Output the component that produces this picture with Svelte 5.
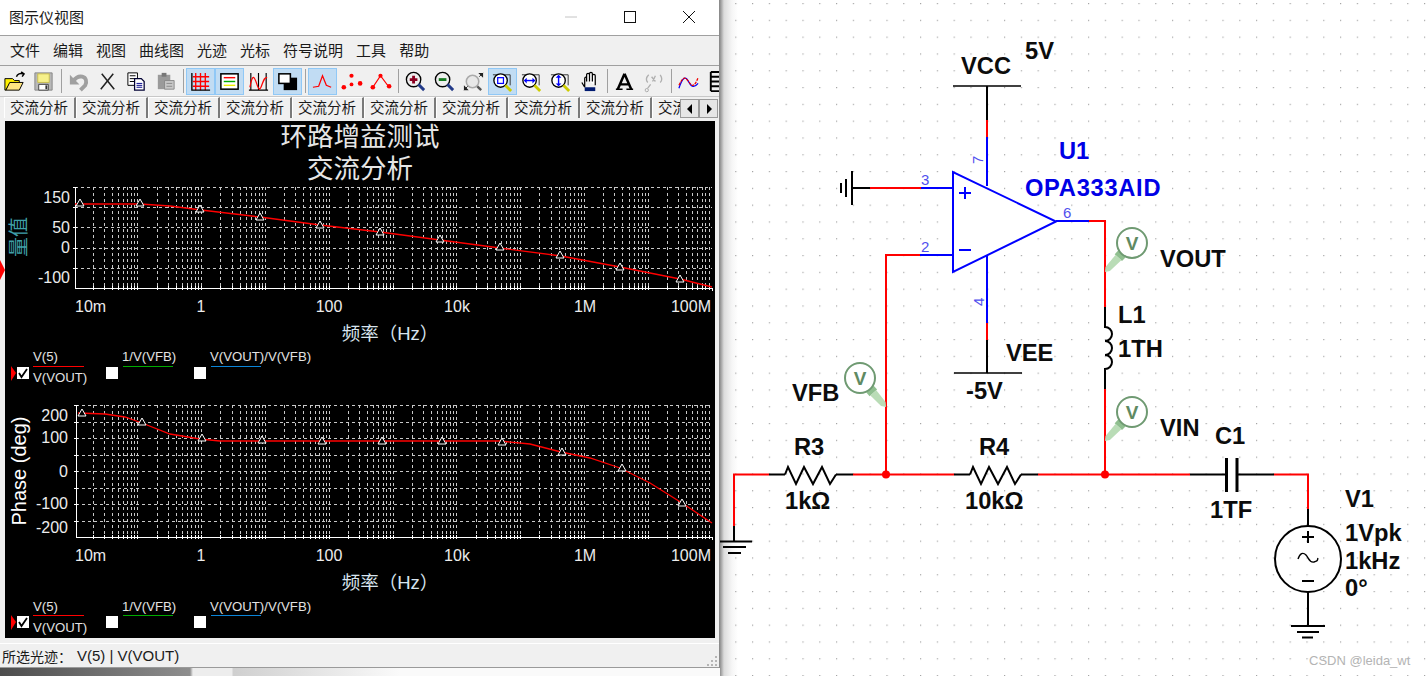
<script>
  const menus = ['文件', '编辑', '视图', '曲线图', '光迹', '光标', '符号说明', '工具', '帮助'];
  const tabs = Array(10).fill('交流分析');

  // log frequency axis, 10m to 100M
  const X0 = 74, DECADE = 63.8, XEND = 712;
  const gridX = [];
  for (let d = 0; d < 10; d++) {
    for (let m = 1; m < 10; m++) {
      const x = X0 + (d + Math.log10(m)) * DECADE;
      if (x > 76 && x <= XEND) gridX.push(+x.toFixed(1));
    }
  }

  const freqLabels = [
    { t: '1', x: 201 }, { t: '100', x: 329 }, { t: '10k', x: 457 }, { t: '1M', x: 585 },
  ];

  const plots = [
    {
      left: 75, top: 187, bottom: 288,
      rows: [187, 207, 227, 248, 268],
      ticksY: [[150, 203], [50, 233], [0, 253], [-100, 283]], labelX: 70, freqY: 312, titleY: 340,
      trace: '75,204 140,204 170,206 201,210 260,217 320,225 380,232 440,240 500,248 561,256 620,267 680,279 712,287',
      marks: [[80, 204], [140, 204], [200, 210], [260, 218], [320, 226], [380, 233], [440, 240], [500, 248], [560, 256], [620, 268], [680, 280]],
      legend: [361, 366.5, 367, 382],
    },
    {
      left: 76, top: 405, bottom: 537,
      rows: [405, 422, 438, 455, 471, 488, 504, 521],
      ticksY: [[200, 421], [100, 443], [0, 477], [-100, 509], [-200, 533]], labelX: 68, freqY: 561, titleY: 589,
      trace: '78,413 105,414 125,417 142,423 170,434 182,436 200,439 220,441 260,441 500,441 530,444 561,452 590,458 620,468 650,483 682,503 712,523',
      marks: [[82, 414], [142, 423], [202, 439], [262, 441], [322, 442], [382, 442], [442, 442], [502, 443], [562, 453], [622, 469], [682, 504]],
      legend: [610.5, 615.5, 616, 631.5],
    },
  ];

  function zigzag(x) {
    const d = [0, 3, 11, 19, 28, 37, 45, 51];
    const y = [474.5, 467, 484, 467, 484, 467, 484, 474.5];
    return d.map((v, i) => `${x + v},${y[i]}`).join(' ');
  }
</script>

{#snippet probe(cx, cy, tipX, tipY)}
  {@const dx = tipX - cx}
  {@const dy = tipY - cy}
  {@const len = Math.hypot(dx, dy)}
  {@const ux = dx / len}
  {@const uy = dy / len}
  <line x1={cx + ux * 15} y1={cy + uy * 15} x2={cx + ux * 20} y2={cy + uy * 20} stroke="#8fbf8f" stroke-width="10" />
  <polygon
    points="{cx + ux * 20 - uy * 4},{cy + uy * 20 + ux * 4} {cx + ux * 20 + uy * 4},{cy + uy * 20 - ux * 4} {tipX - ux * 4 + uy * 3},{tipY - uy * 4 - ux * 3} {tipX},{tipY} {tipX - ux * 4 - uy * 3},{tipY - uy * 4 + ux * 3}"
    fill="#b9dcb6"
  />
  <circle {cx} {cy} r="15" fill="#fff" stroke="#6f9a72" stroke-width="2" />
  <text x={cx} y={cy + 7} class="probe-v">V</text>
{/snippet}

<div class="page">
  <div class="left">
    <div class="window">
      <div class="titlebar">
        <span class="title">图示仪视图</span>
        <div class="caption">
          <svg width="14" height="14" viewBox="0 0 14 14"><path d="M1 7h12" stroke="#c4c4c4" /></svg>
          <svg width="14" height="14" viewBox="0 0 14 14"><rect x="1.5" y="1.5" width="11" height="11" fill="none" stroke="#111" /></svg>
          <svg width="14" height="14" viewBox="0 0 14 14"><path d="M1 1l12 12M13 1L1 13" stroke="#111" /></svg>
        </div>
      </div>

      <nav class="menubar">
        {#each menus as m}<span>{m}</span>{/each}
      </nav>

      <div class="toolbar">
        <button class="tb" aria-label="打开">
          <svg viewBox="0 0 24 24"><path d="M2 9h8l2 2h5v3H7l-4 7H2z" fill="#fff000" stroke="#000" /><path d="M3 21l4-8h14l-4 8z" fill="#ffe680" stroke="#000" /><path d="M14 7c1-3 4-4 7-3M19 2l3 2-2 3" fill="none" stroke="#000" stroke-width="1.5" /></svg>
        </button>
        <button class="tb" aria-label="保存">
          <svg viewBox="0 0 24 24"><path d="M3 3h18v18H3z" fill="#b8b8b8" stroke="#888" /><path d="M6 4h12v9H6z" fill="#f6f08a" stroke="#c8bc50" /><path d="M7 15h10v6H7z" fill="#fff" stroke="#444" /><path d="M14 16h2v4h-2z" fill="#333" /></svg>
        </button>
        <i class="sep"></i>
        <button class="tb" aria-label="撤销">
          <svg viewBox="0 0 24 24"><path d="M6 12c3-4 6-6 10-5s5 5 3 9l-5 5" fill="none" stroke="#a0a0a0" stroke-width="4" /><path d="M3 5v10h10z" fill="#a0a0a0" /></svg>
        </button>
        <button class="tb" aria-label="剪切">
          <svg viewBox="0 0 24 24"><path d="M6 4l13 16M18 4L5 20" stroke="#222" stroke-width="1.6" fill="none" /></svg>
        </button>
        <button class="tb" aria-label="复制">
          <svg viewBox="0 0 24 24"><path d="M3 3h10v13H3z" fill="#fff" stroke="#000" /><path d="M5 6h6M5 9h6M5 12h6" stroke="#000" /><path d="M10 9h7l3 3v9H10z" fill="#fff" stroke="#003" stroke-width="1.3" /><path d="M12 14h6M12 16h6M12 18h6" stroke="#00008a" /></svg>
        </button>
        <button class="tb" aria-label="粘贴">
          <svg viewBox="0 0 24 24"><path d="M4 5h13v15H4z" fill="#9a9a9a" /><path d="M8 3h5v4H8z" fill="#777" /><path d="M11 11h10v9H11z" fill="#c8c8c8" stroke="#8a8a8a" /><path d="M13 14h6M13 17h6" stroke="#8a8a8a" /></svg>
        </button>
        <i class="sep"></i>
        <button class="tb on" aria-label="网格">
          <svg viewBox="0 0 24 24"><path d="M4 7h17M4 12h17M4 17h17M7 3v18M12 3v18M17 3v18" stroke="#f00" stroke-width="1.4" /><path d="M3 3v18h19" fill="none" stroke="#000" stroke-width="1.4" /></svg>
        </button>
        <button class="tb on" aria-label="图例">
          <svg viewBox="0 0 24 24"><rect x="3" y="4" width="18" height="16" fill="#fff" stroke="#000" stroke-width="1.6" /><path d="M6 8h12" stroke="#f00" stroke-width="1.5" /><path d="M6 12h12" stroke="#0a0" stroke-width="1.5" /><path d="M6 16h12" stroke="#ee0" stroke-width="1.5" /></svg>
        </button>
        <button class="tb" aria-label="曲线">
          <svg viewBox="0 0 24 24"><path d="M4 3v18M12 3v18M20 3v18M2 21h20" stroke="#000" stroke-width="1.2" fill="none" /><path d="M3 18c3-16 5-10 7-4s3 8 5 3 3-10 6-9" fill="none" stroke="#f00" stroke-width="1.3" /></svg>
        </button>
        <button class="tb on" aria-label="反色">
          <svg viewBox="0 0 24 24"><rect x="8" y="8" width="14" height="13" fill="#000" /><rect x="3" y="4" width="12" height="10" fill="#fff" stroke="#000" stroke-width="1.6" /></svg>
        </button>
        <i class="sep"></i>
        <button class="tb on" aria-label="光迹线">
          <svg viewBox="0 0 24 24"><path d="M2 18l6-1 4-11 4 10 5 2" fill="none" stroke="#f00" stroke-width="1.3" /></svg>
        </button>
        <button class="tb" aria-label="光迹点">
          <svg viewBox="0 0 24 24"><circle cx="4" cy="18" r="2.4" fill="#f00" /><circle cx="12" cy="6" r="2.2" fill="#f00" /><circle cx="12" cy="15" r="2" fill="#f00" /><circle cx="21" cy="14" r="2.4" fill="#f00" /></svg>
        </button>
        <button class="tb" aria-label="光迹点线">
          <svg viewBox="0 0 24 24"><path d="M4 18l8-12 9 12" fill="none" stroke="#f00" stroke-width="1.3" /><circle cx="4" cy="18" r="2.4" fill="#f00" /><circle cx="12" cy="6" r="2.2" fill="#f00" /><circle cx="21" cy="17" r="2.4" fill="#f00" /></svg>
        </button>
        <i class="sep"></i>
        <button class="tb" aria-label="放大">
          <svg viewBox="0 0 24 24"><circle cx="10" cy="10" r="7.5" fill="#eee" stroke="#000" stroke-width="1.4" /><path d="M6 10h8M10 6v8" stroke="#8a0020" stroke-width="3" /><path d="M15 15l6 6" stroke="#223a88" stroke-width="3" /></svg>
        </button>
        <button class="tb" aria-label="缩小">
          <svg viewBox="0 0 24 24"><circle cx="10" cy="10" r="7.5" fill="#eee" stroke="#000" stroke-width="1.4" /><path d="M6 10h8" stroke="#157a20" stroke-width="3" /><path d="M15 15l6 6" stroke="#223a88" stroke-width="3" /></svg>
        </button>
        <button class="tb" aria-label="全部">
          <svg viewBox="0 0 24 24"><circle cx="11" cy="12" r="6.5" fill="#e8e8e8" stroke="#aaa" stroke-width="1.6" /><path d="M16 17l4 4" stroke="#555" stroke-width="2.5" /><path d="M17 3h5v5zM7 21H2v-5z" fill="#222" /><path d="M22 3l-4 4M2 21l4-4" stroke="#222" /></svg>
        </button>
        <button class="tb on" aria-label="框选">
          <svg viewBox="0 0 24 24"><path d="M2 5h18v11" fill="none" stroke="#333" /><circle cx="10" cy="11" r="7" fill="#fff" stroke="#000" stroke-width="1.4" /><rect x="7" y="8" width="6" height="6" fill="none" stroke="#00f" stroke-width="1.3" /><path d="M15 16l6 6" stroke="#cc0" stroke-width="3" /></svg>
        </button>
        <button class="tb" aria-label="水平">
          <svg viewBox="0 0 24 24"><path d="M2 5h18v11" fill="none" stroke="#333" /><circle cx="10" cy="11" r="7" fill="#fff" stroke="#000" stroke-width="1.4" /><path d="M5 11h10" stroke="#00f" stroke-width="1.5" /><path d="M4 11l3-3v6zM16 11l-3-3v6z" fill="#00f" /><path d="M15 16l6 6" stroke="#cc0" stroke-width="3" /></svg>
        </button>
        <button class="tb" aria-label="垂直">
          <svg viewBox="0 0 24 24"><path d="M2 5h18v11" fill="none" stroke="#333" /><circle cx="10" cy="11" r="7" fill="#fff" stroke="#000" stroke-width="1.4" /><path d="M10 6v10" stroke="#00f" stroke-width="1.5" /><path d="M10 5l-3 3h6zM10 17l-3-3h6z" fill="#00f" /><path d="M15 16l6 6" stroke="#cc0" stroke-width="3" /></svg>
        </button>
        <button class="tb" aria-label="平移">
          <svg viewBox="0 0 24 24"><path d="M7 18V9M7 18l-3-5M7 9c0-2 2-2 2 0v3-7c0-2 3-2 3 0v7-8c0-2 3-2 3 0v8-6c0-2 3-2 3 0v10" fill="#fff" stroke="#000" stroke-width="1.3" /><path d="M7 18h11v4H7z" fill="#001a70" /></svg>
        </button>
        <i class="sep"></i>
        <button class="tb" aria-label="文字">
          <svg viewBox="0 0 24 24"><path d="M12 4L5 20M12 4l7 16M8 15h8" stroke="#000" stroke-width="2.6" fill="none" /><path d="M3 20h7M14 20h7" stroke="#000" stroke-width="1.5" /></svg>
        </button>
        <button class="tb" aria-label="表达式">
          <svg viewBox="0 0 24 24"><circle cx="5" cy="21" r="1.7" fill="none" stroke="#aaa" /><path d="M6 19l3-4M7 5C4 8 4 11 6 13M19 5c2 3 2 6 0 8M10 7l4 5M14 6l-3 6" stroke="#b0b0b0" stroke-width="1.4" fill="none" /></svg>
        </button>
        <i class="sep"></i>
        <button class="tb" aria-label="叠加">
          <svg viewBox="0 0 24 24"><path d="M2 19C6 7 9 6 12 12s6 7 10 2" fill="none" stroke="#00f" stroke-width="1.3" /><path d="M2 16c4-8 6-10 10-4s6 6 10-4" fill="none" stroke="#e00" stroke-width="1.3" stroke-dasharray="3 1" /></svg>
        </button>
        <button class="tb" aria-label="导出">
          <svg viewBox="0 0 24 24"><path d="M5 2v20M5 2h9M5 7h9M5 12h9M5 17h9M5 22h9" stroke="#000" stroke-width="2" fill="none" /><path d="M14 7h9M14 18h9" stroke="#e00" /></svg>
        </button>
      </div>

      <div class="tabstrip">
        <div class="tabs">
          {#each tabs as t}<span class="tab">{t}</span>{/each}
        </div>
        <div class="scroll">
          <button aria-label="上一页"><svg width="8" height="10" viewBox="0 0 8 10"><path d="M6 0v10L1 5z" fill="#000" /></svg></button>
          <button aria-label="下一页"><svg width="8" height="10" viewBox="0 0 8 10"><path d="M2 0v10l5-5z" fill="#000" /></svg></button>
        </div>
      </div>

      <div class="plotwrap">
        <svg class="plot" viewBox="5 121 710 517" width="710" height="517">
          <polygon points="0,260 5,270 0,280" fill="#f00" />
          <text x="360" y="146" class="title1">环路增益测试</text>
          <text x="360" y="178" class="title1">交流分析</text>

          {#each plots as p}
            <!-- grid -->
            {#each gridX as x}
              <line x1={x} x2={x} y1={p.top} y2={p.bottom} class="grid" />
            {/each}
            {#each p.rows as y}
              <line x1={p.left} x2={XEND} y1={y} y2={y} class="grid" />
            {/each}
            <!-- axes -->
            <path d="M{p.left - 2} {p.top}h2V{p.bottom}H{XEND}v3" class="axis" />
            {#each gridX as x}
              <line x1={x} x2={x} y1={p.bottom - 2} y2={p.bottom + 2} class="axis" />
            {/each}
            {#each p.rows as y}
              <line x1={p.left - 2} x2={p.left + 2} y1={y} y2={y} class="axis" />
            {/each}

            {#each p.ticksY as [v, y]}
              <text x={p.labelX} {y} class="tick end">{v}</text>
            {/each}
            <text x="75" y={p.freqY} class="tick">10m</text>
            {#each freqLabels as f}
              <text x={f.x} y={p.freqY} class="tick mid">{f.t}</text>
            {/each}
            <text x="711" y={p.freqY} class="tick end">100M</text>
            <text x="390" y={p.titleY} class="xtitle">频率（Hz）</text>

            <polyline points={p.trace} class="trace" />
            {#each p.marks as [x, y]}
              <polygon points="{x},{y - 5} {x - 4},{y + 2} {x + 4},{y + 2}" class="mark" />
            {/each}

            <!-- legend -->
            <text x="33" y={p.legend[0]} class="leg">V(5)</text>
            <line x1="33" x2="84" y1={p.legend[1]} y2={p.legend[1]} stroke="#f00" />
            <text x="122" y={p.legend[0]} class="leg">1/V(VFB)</text>
            <line x1="123" x2="173" y1={p.legend[1]} y2={p.legend[1]} stroke="#0a0" />
            <text x="210" y={p.legend[0]} class="leg">V(VOUT)/V(VFB)</text>
            <line x1="211" x2="261" y1={p.legend[1]} y2={p.legend[1]} stroke="#0a84d8" />
            <polygon points="11,{p.legend[2] - 1} 16,{p.legend[2] + 6} 11,{p.legend[2] + 14}" fill="#f00" />
            <rect x="17" y={p.legend[2]} width="12" height="12" fill="#fff" />
            <path d="M19 {p.legend[2] + 6}l2.5 4 5.5-8" fill="none" stroke="#000" stroke-width="1.8" />
            <rect x="106" y={p.legend[2]} width="12" height="12" fill="#fff" />
            <rect x="194" y={p.legend[2]} width="12" height="12" fill="#fff" />
            <text x="33" y={p.legend[3]} class="leg">V(VOUT)</text>
          {/each}

          <text transform="translate(26 237) rotate(-90)" class="ylabel cjk">量值</text>
          <text transform="translate(26 471) rotate(-90)" class="ylabel">Phase (deg)</text>
        </svg>
      </div>

      <div class="statusbar">
        <span class="status-cn">所选光迹：</span><span>V(5) | V(VOUT)</span>
        <svg class="grip" width="12" height="12" viewBox="0 0 12 12">
          <path d="M9 2h2v2H9zM5 6h2v2H5zM9 6h2v2H9zM1 10h2v2H1zM5 10h2v2H5zM9 10h2v2H9z" fill="#b5b5b5" />
        </svg>
      </div>
    </div>
    <div class="under"></div>
  </div>

  <div class="canvas">
    <svg class="sheet" viewBox="720 0 706 676" width="706" height="676">
      <defs>
        <pattern id="dots" x="836" y="3" width="16.8" height="16.8" patternUnits="userSpaceOnUse">
          <rect width="1.2" height="1.2" fill="#a4a4a4" />
        </pattern>
      </defs>
      <rect x="720" y="0" width="706" height="676" fill="url(#dots)" />

      <!-- VCC -->
      <path d="M987 86v34" class="blk" />
      <path d="M953 86h68" class="thin" />
      <path d="M987 120v17" class="red" />
      <path d="M987 137v49" class="blu" />
      <!-- VEE -->
      <path d="M987 256v67" class="blu" />
      <path d="M987 323v17" class="red" />
      <path d="M987 340v33" class="blk" />
      <path d="M954 373h68" class="thin" />

      <!-- op amp -->
      <polygon points="953,172 953,272 1056,221.5" class="opamp" />
      <path d="M959 193h12M965 187v12M959 250h12" class="blu" />

      <!-- pin 3 and its ground -->
      <path d="M921 188h32" class="blu" />
      <path d="M870 188h51" class="red" />
      <path d="M852 188h18M852 171v34M846 179v18M841 183v10" class="blk" />
      <!-- pin 2 -->
      <path d="M920 255h33" class="blu" />
      <path d="M920 255h-34v219" class="red" />
      <!-- pin 6 -->
      <path d="M1056 221h33" class="blu" />
      <path d="M1089 221h16v86" class="red" />

      <!-- L1 -->
      <path d="M1105 307v20a7 7 0 0 1 0 14a7 7 0 0 1 0 14a7 7 0 0 1 0 14v20" class="blk" />
      <path d="M1105 389v85" class="red" />

      <!-- main line -->
      <path d="M734 526V474.5h35" class="red" />
      <path d="M734 526v15.5M720 541.5h32M723 547h23M728 553h13" class="blk" />
      <path d="M769 474.5h16" class="blk" />
      <polyline points={zigzag(785)} class="blk" />
      <path d="M836 474.5h17" class="blk" />
      <path d="M853 474.5h101" class="red" />
      <path d="M954 474.5h16" class="blk" />
      <polyline points={zigzag(970)} class="blk" />
      <path d="M1021 474.5h17" class="blk" />
      <path d="M1038 474.5h152" class="red" />
      <path d="M1190 474.5h36M1237 474.5h37" class="blk" />
      <path d="M1226.5 458v34M1237 458v34" class="plate" />
      <path d="M1274 474.5h34V509" class="red" />

      <!-- V1 -->
      <path d="M1308 509v17M1308 592v34M1291 626h34M1297 632h22M1302 637.5h11" class="blk" />
      <circle cx="1308" cy="559" r="33" fill="none" stroke="#000" stroke-width="2" />
      <path d="M1302 537h12M1308 531v12M1302 581h12" class="blk" />
      <path d="M1298 559c2-6 5-7 8-4s3 8 8 7 3-2 4-4" fill="none" stroke="#000" stroke-width="1.4" />

      <circle cx="886" cy="474.5" r="4" fill="#f00" />
      <circle cx="1105" cy="474.5" r="4" fill="#f00" />

      {@render probe(1132, 243, 1105, 272)}
      {@render probe(860, 378, 886, 407)}
      {@render probe(1132, 412, 1105, 441)}

      <text x="961" y="74" class="lbl">VCC</text>
      <text x="1025" y="59" class="lbl">5V</text>
      <text x="1059" y="159" class="lbl blue">U1</text>
      <text x="1025" y="196" class="lbl blue wide">OPA333AID</text>
      <text x="1160" y="267" class="lbl">VOUT</text>
      <text x="1118" y="323" class="lbl">L1</text>
      <text x="1118" y="357" class="lbl">1TH</text>
      <text x="1006" y="361" class="lbl">VEE</text>
      <text x="966" y="399" class="lbl">-5V</text>
      <text x="792" y="401" class="lbl">VFB</text>
      <text x="794" y="455" class="lbl">R3</text>
      <text x="785" y="509" class="lbl">1kΩ</text>
      <text x="979" y="455" class="lbl">R4</text>
      <text x="965" y="509" class="lbl">10kΩ</text>
      <text x="1160" y="436" class="lbl">VIN</text>
      <text x="1215" y="444" class="lbl">C1</text>
      <text x="1210" y="518" class="lbl">1TF</text>
      <text x="1345" y="507" class="lbl">V1</text>
      <text x="1345" y="541" class="lbl">1Vpk</text>
      <text x="1345" y="569" class="lbl">1kHz</text>
      <text x="1345" y="596" class="lbl">0°</text>

      <text x="921" y="185" class="pin">3</text>
      <text x="921" y="252" class="pin">2</text>
      <text x="1063" y="218" class="pin">6</text>
      <text transform="translate(983 164) rotate(-90)" class="pin">7</text>
      <text transform="translate(984 306) rotate(-90)" class="pin">4</text>

      <text x="1309" y="665" class="mark-csdn">CSDN @leida_wt</text>
    </svg>
  </div>
</div>

<style>
  :global(body) {
    margin: 0;
    background: #fff;
    overflow: hidden;
  }
  .page {
    display: flex;
    width: 1426px;
    height: 676px;
    overflow: hidden;
    font-family: "Liberation Sans", "Noto Sans CJK SC", sans-serif;
    color: #1a1a1a;
  }
  .left {
    display: flex;
    flex-direction: column;
    width: 720px;
    flex: none;
  }
  .window {
    display: flex;
    flex-direction: column;
    height: 668px;
    background: #f0f0f0;
    box-sizing: border-box;
    border-right: 1px solid #8c8c8c;
  }
  .under {
    flex: 1;
    background: linear-gradient(90deg, #4d4d4d, #8e8e8e 190px, #ededed 193px, #ededed 232px, #cfcfcf 233px, #fafafa 400px);
  }
  .titlebar {
    display: flex;
    align-items: center;
    justify-content: space-between;
    height: 35px;
    flex: none;
    background: #fff;
    border-bottom: 1px solid #a0a0a0;
  }
  .title {
    margin: 0 0 2px 9px;
    font-size: 15px;
  }
  .caption {
    display: flex;
    gap: 45px;
    margin-right: 23px;
    padding-bottom: 2px;
  }
  .caption svg { display: block; }
  .menubar {
    display: flex;
    align-items: center;
    gap: 13px;
    height: 30px;
    flex: none;
    box-sizing: border-box;
    padding: 0 0 2px 10px;
    font-size: 15px;
    border-bottom: 1px solid #a0a0a0;
  }
  .toolbar {
    display: flex;
    align-items: center;
    height: 30px;
    flex: none;
    overflow: hidden;
    border-bottom: 1px solid #c8c8c8;
  }
  .tb {
    display: flex;
    align-items: center;
    justify-content: center;
    width: 29px;
    height: 27px;
    flex: none;
    box-sizing: border-box;
    padding: 0;
    background: none;
    border: 1px solid transparent;
  }
  .tb svg {
    width: 23px;
    height: 23px;
    display: block;
  }
  .tb.on {
    background: #c1dcf3;
    border-color: #90c8f6;
  }
  .sep {
    display: block;
    width: 6px;
    height: 24px;
    flex: none;
    background: linear-gradient(#a0a0a0, #a0a0a0) center / 1px 100% no-repeat;
  }
  .tabstrip {
    position: relative;
    height: 24px;
    flex: none;
    overflow: hidden;
  }
  .tabs {
    display: flex;
    padding-left: 4px;
    width: 676px;
    overflow: hidden;
  }
  .tab {
    width: 72px;
    height: 21px;
    line-height: 21px;
    flex: none;
    box-sizing: border-box;
    padding-left: 5px;
    font-size: 14.5px;
    white-space: nowrap;
    border-top: 1px solid #fff;
    border-left: 1px solid #fff;
    border-right: 2px solid #7a7a7a;
  }
  .scroll {
    position: absolute;
    top: 2px;
    left: 680px;
    display: flex;
  }
  .scroll button {
    display: flex;
    align-items: center;
    justify-content: center;
    width: 19px;
    height: 19px;
    padding: 0;
    background: #e6e6e6;
    border: 1px solid #9a9a9a;
  }
  .plotwrap {
    padding: 0 5px;
    flex: none;
    height: 518px;
  }
  .plot {
    display: block;
    background: #000;
    overflow: visible;
  }
  .statusbar {
    position: relative;
    flex: 1;
    display: flex;
    align-items: center;
    margin-top: 4px;
    padding-left: 2px;
    font-size: 15px;
    border-top: 1px solid #fff;
    border-bottom: 1px solid #9a9a9a;
  }
  .status-cn {
    font-size: 14px;
    width: 75px;
  }
  .grip {
    position: absolute;
    right: 1px;
    bottom: 1px;
  }

  /* plot */
  .title1 {
    fill: #e6e6e6;
    font-family: "Noto Sans CJK SC", sans-serif;
    font-size: 26.5px;
    text-anchor: middle;
  }
  .grid {
    stroke: #c8c8c8;
    stroke-width: 1;
    stroke-dasharray: 3 3;
    shape-rendering: crispEdges;
  }
  .axis {
    fill: none;
    stroke: #fff;
    stroke-width: 1;
    shape-rendering: crispEdges;
  }
  .tick {
    fill: #ececec;
    font-size: 16px;
  }
  .tick.end { text-anchor: end; }
  .tick.mid { text-anchor: middle; }
  .xtitle {
    fill: #d8e4ee;
    font-size: 18.5px;
    text-anchor: middle;
  }
  .trace {
    fill: none;
    stroke: #f00;
    stroke-width: 1.3;
  }
  .mark {
    fill: #000;
    stroke: #fff;
    stroke-width: 1;
  }
  .leg {
    fill: #e2e2e2;
    font-size: 13.2px;
  }
  .ylabel {
    fill: #fff;
    font-size: 20px;
    text-anchor: middle;
  }
  .ylabel.cjk { fill: #3f9fa8; }

  /* schematic */
  .canvas {
    flex: 1;
    background: linear-gradient(90deg, #8f8f8f, #dcdcdc 4px, #f6f6f6 12px, #fff 18px);
  }
  .sheet { display: block; }
  .blk, .red, .blu, .plate, .thin {
    fill: none;
    stroke-width: 2;
  }
  .blk, .thin { stroke: #000; }
  .thin { stroke-width: 1.4; }
  .red { stroke: #f00; }
  .blu { stroke: #00f; }
  .plate {
    stroke: #000;
    stroke-width: 3;
  }
  .opamp {
    fill: #fff;
    stroke: #00f;
    stroke-width: 2;
  }
  .lbl {
    fill: #0c0c0c;
    font-weight: 700;
    font-size: 23.7px;
  }
  .lbl.blue { fill: #0000e6; }
  .lbl.wide { letter-spacing: 0.7px; }
  .pin {
    fill: #5050ee;
    font-size: 15px;
  }
  .probe-v {
    fill: #5f8a62;
    font-weight: 700;
    font-size: 19px;
    text-anchor: middle;
  }
  .mark-csdn {
    fill: #b4b4b4;
    font-size: 13px;
  }
</style>
